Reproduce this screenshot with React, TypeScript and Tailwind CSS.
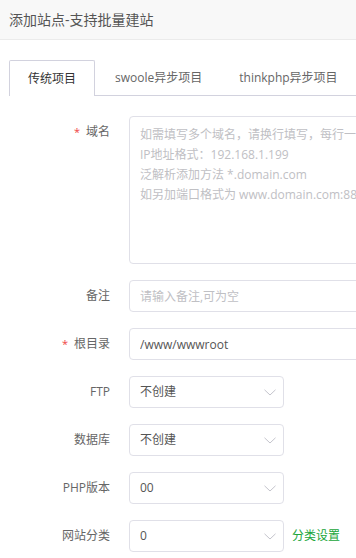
import React from "react";

const FONT = { fontFamily: '"Open Sans", "Noto Sans CJK SC", sans-serif' };

function Chevron() {
  return (
    <svg width="12" height="7" viewBox="0 0 12 7" className="shrink-0">
      <path d="M0.5 0.8 L6 6 L11.5 0.8" fill="none" stroke="#c4c4cc" strokeWidth="1" />
    </svg>
  );
}

function Label({ text, required }: { text: string; required?: boolean }) {
  return (
    <div className="w-[101px] shrink-0 h-[32px] flex items-center justify-end text-[12px] text-[#666]">
      {required && <span className="text-[#ef4444] mr-[6px] text-[11px]">*</span>}
      {text}
    </div>
  );
}

function Select({ value }: { value: string }) {
  return (
    <div className="w-[155px] h-[32px] border border-[#e0e0e8] rounded-[4px] flex items-center justify-between pl-[10px] pr-[7px] text-[12px] text-[#555]">
      <span>{value}</span>
      <Chevron />
    </div>
  );
}

function Row({ children }: { children: React.ReactNode }) {
  return <div className="flex items-start mb-[16px]">{children}</div>;
}

export default function App() {
  const tabs = ["传统项目", "swoole异步项目", "thinkphp异步项目"];
  return (
    <div className="w-[356px] h-[558px] overflow-hidden bg-white" style={FONT}>
      <div className="h-[40px] bg-[#f8f8f8] border-b border-[#ebebeb] px-[9px] flex items-center text-[14px] text-[#555]">
        添加站点-支持批量建站
      </div>

      <div className="pl-[9px] pt-[20px]">
        <div className="flex border-b border-[#d2d2de] h-[36px]">
          {tabs.map((t, i) => (
            <div
              key={t}
              className={
                i === 0
                  ? "shrink-0 whitespace-nowrap h-[36px] px-[18px] flex items-center border border-b-0 border-[#d2d2de] rounded-t-[2px] bg-white text-[12px] text-[#333] -mb-px"
                  : "shrink-0 whitespace-nowrap h-[35px] pl-[20px] pr-[17px] flex items-center text-[12px] text-[#666]"
              }
            >
              {t}
            </div>
          ))}
        </div>

        <div className="pt-[20px]">
          <Row>
            <Label text="域名" required />
            <textarea
              wrap="off"
              className="ml-[19px] w-[500px] h-[148px] shrink-0 border border-[#e0e0e8] rounded-[4px] px-[10px] pt-[8px] text-[12px] leading-[20px] resize-none outline-none placeholder:text-[#c0c0c4] whitespace-pre overflow-hidden"
              placeholder={
                "如需填写多个域名，请换行填写，每行一个域名，默认为80端口\nIP地址格式：192.168.1.199\n泛解析添加方法 *.domain.com\n如另加端口格式为 www.domain.com:88"
              }
            />
          </Row>
          <Row>
            <Label text="备注" />
            <input
              className="ml-[19px] w-[500px] h-[32px] shrink-0 border border-[#e0e0e8] rounded-[4px] px-[10px] text-[12px] text-[#555] outline-none placeholder:text-[#c0c0c4]"
              placeholder="请输入备注,可为空"
            />
          </Row>
          <Row>
            <Label text="根目录" required />
            <input
              className="ml-[19px] w-[500px] h-[32px] shrink-0 border border-[#e0e0e8] rounded-[4px] px-[10px] text-[12px] text-[#555] outline-none"
              defaultValue="/www/wwwroot"
            />
          </Row>
          <Row>
            <Label text="FTP" />
            <div className="ml-[19px]">
              <Select value="不创建" />
            </div>
          </Row>
          <Row>
            <Label text="数据库" />
            <div className="ml-[19px]">
              <Select value="不创建" />
            </div>
          </Row>
          <Row>
            <Label text="PHP版本" />
            <div className="ml-[19px]">
              <Select value="00" />
            </div>
          </Row>
          <Row>
            <Label text="网站分类" />
            <div className="ml-[19px] flex items-center">
              <Select value="0" />
              <span className="ml-[8px] text-[12px] text-[#20a53a]">分类设置</span>
            </div>
          </Row>
        </div>
      </div>
    </div>
  );
}
